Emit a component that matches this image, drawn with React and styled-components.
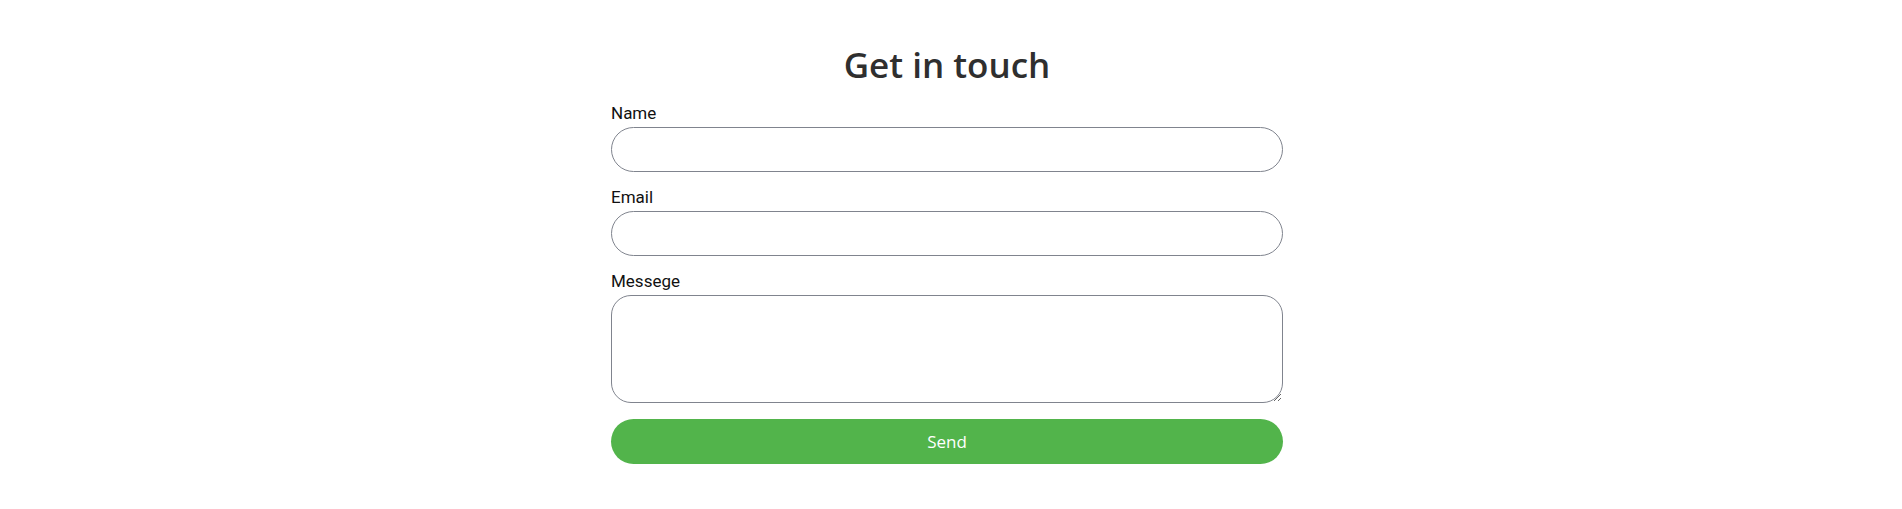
import React from "react";
import styled, { createGlobalStyle } from "styled-components";

const GlobalStyle = createGlobalStyle`
  html, body { margin: 0; padding: 0; background: #ffffff; }
  body { font-family: "Roboto", "Liberation Sans", sans-serif; }
  * { box-sizing: border-box; }
`;

const Page = styled.main`
  display: flex;
  justify-content: center;
  padding: 41px 8px 0 0;
`;

const Form = styled.form`
  width: 672px;
  display: flex;
  flex-direction: column;
  gap: 16px;
`;

const Title = styled.h2`
  margin: 0 0 -1px;
  text-align: center;
  font-family: "Open Sans", "Noto Sans", sans-serif;
  font-weight: 600;
  font-size: 35px;
  line-height: 48px;
  color: #2f2f2f;
`;

const Field = styled.div`
  display: flex;
  flex-direction: column;
  gap: 4px;
`;

const Label = styled.label`
  font-family: "Roboto", sans-serif;
  font-size: 17px;
  line-height: 19px;
  color: #111111;
`;

const Input = styled.input`
  height: 45px;
  width: 100%;
  border: 1px solid #80848e;
  border-radius: 23px;
  padding: 0 18px;
  font-size: 16px;
  background: #fff;
  outline: none;
`;

const TextArea = styled.textarea`
  height: 108px;
  width: 100%;
  border: 1px solid #80848e;
  border-radius: 20px;
  padding: 12px 18px;
  font-size: 16px;
  font-family: "Roboto", sans-serif;
  background: #fff;
  outline: none;
  resize: vertical;
`;

const Button = styled.button`
  height: 45px;
  width: 100%;
  border: none;
  border-radius: 23px;
  background: #52b44b;
  color: #ffffff;
  font-family: "Open Sans", "Noto Sans", sans-serif;
  font-size: 17px;
  cursor: pointer;
`;

export default function App() {
  return (
    <>
      <GlobalStyle />
      <Page>
        <Form onSubmit={(e) => e.preventDefault()}>
          <Title>Get in touch</Title>
          <Field>
            <Label htmlFor="name">Name</Label>
            <Input id="name" type="text" />
          </Field>
          <Field>
            <Label htmlFor="email">Email</Label>
            <Input id="email" type="email" />
          </Field>
          <Field>
            <Label htmlFor="msg">Messege</Label>
            <TextArea id="msg" />
          </Field>
          <Button type="submit">Send</Button>
        </Form>
      </Page>
    </>
  );
}
